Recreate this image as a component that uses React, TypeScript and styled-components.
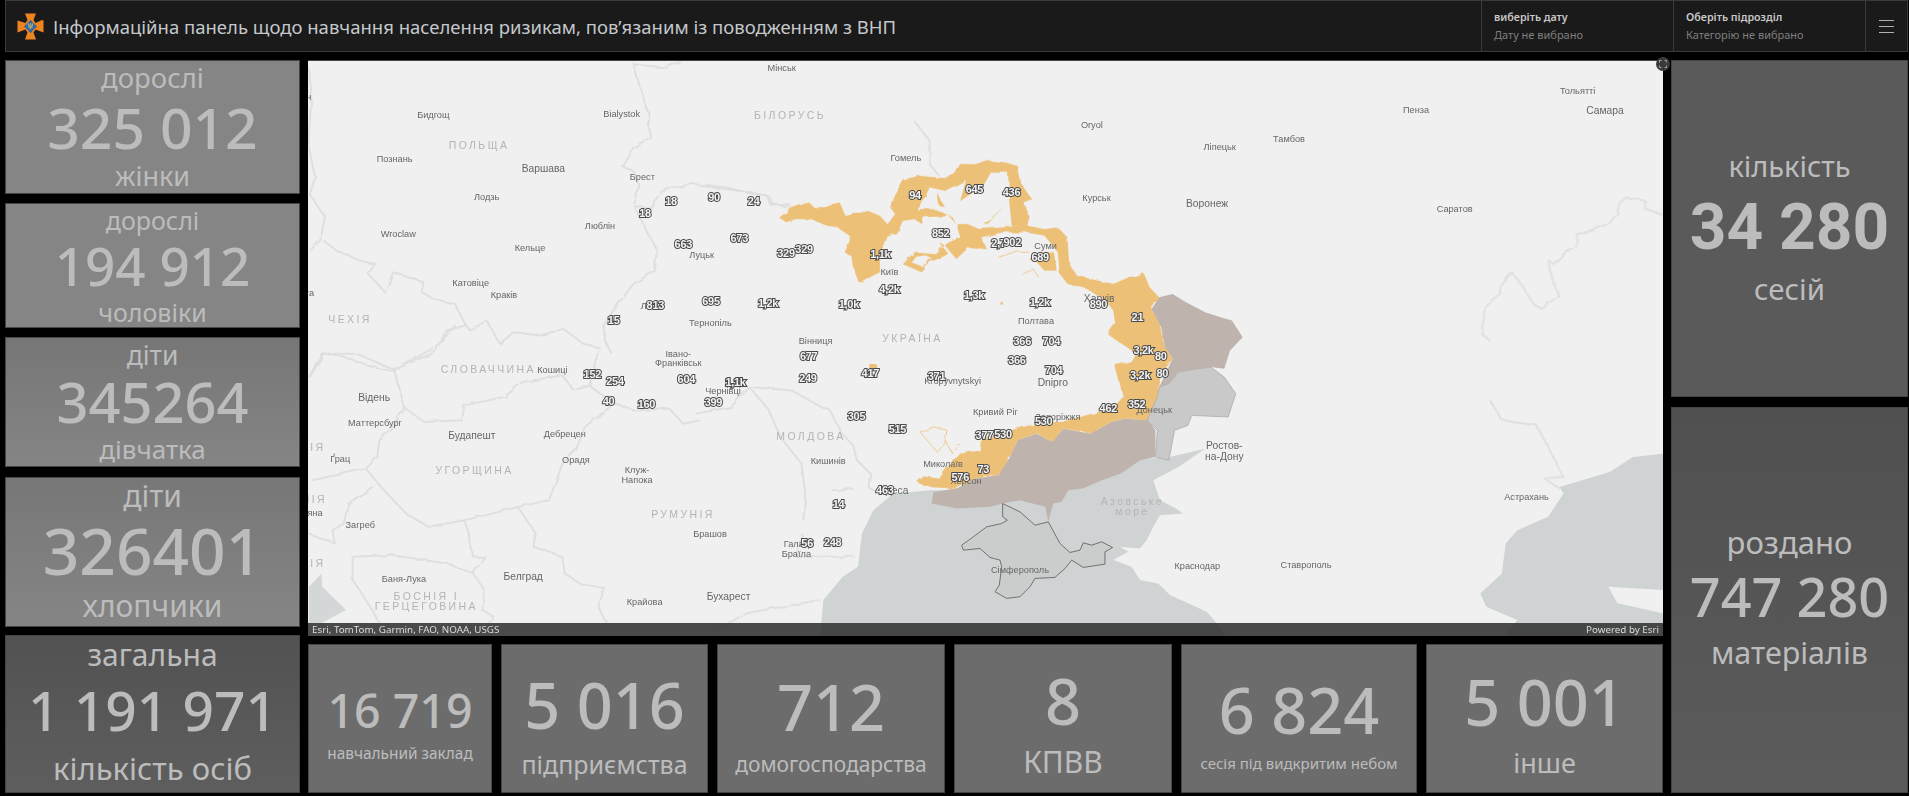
import React from "react";
import styled, { createGlobalStyle } from "styled-components";

const Global = createGlobalStyle`
  html, body { margin: 0; padding: 0; background: #000; }
  #root { width: 1909px; height: 796px; overflow: hidden; }
`;

const Page = styled.div`
  display: flex;
  flex-direction: column;
  gap: 8px;
  padding: 0 1px 3px 5px;
  width: 1903px;
  height: 793px;
  background: #000;
  font-family: "Noto Sans", sans-serif;
`;

const Header = styled.header`
  display: flex;
  align-items: stretch;
  height: 52px;
  background: #1a1a1a;
  border: 1px solid #3a3a3a;
  box-sizing: border-box;
`;

const Brand = styled.div`
  flex: 1;
  display: flex;
  align-items: center;
  gap: 9px;
  padding-left: 11px;
`;

const Title = styled.h1`
  margin: 0;
  font: 400 18.5px "Noto Sans", sans-serif;
  color: #c4c8cc;
  white-space: nowrap;
`;

const Picker = styled.div`
  width: 192px;
  box-sizing: border-box;
  border-left: 1px solid #3a3a3a;
  padding: 8px 0 0 12px;
`;

const PickerTitle = styled.div`
  font: 600 10.7px/17px "Noto Sans", sans-serif;
  color: #c8c8c8;
`;

const PickerValue = styled.div`
  font: 400 11px/17px "Noto Sans", sans-serif;
  color: #7f7f7f;
`;

const Burger = styled.div`
  width: 42px;
  box-sizing: border-box;
  border-left: 1px solid #3a3a3a;
  display: flex;
  align-items: center;
  justify-content: center;
  color: #b0b0b0;
`;

const Body = styled.div`
  display: flex;
  gap: 8px;
  height: 733px;
`;

const LeftColumn = styled.div`
  width: 295px;
  display: flex;
  flex-direction: column;
`;

const CenterColumn = styled.div`
  width: 1355px;
  display: flex;
  flex-direction: column;
  gap: 8px;
`;

const RightColumn = styled.div`
  width: 237px;
  display: flex;
  flex-direction: column;
  gap: 10px;
`;

const BottomRow = styled.div`
  display: grid;
  grid-template-columns: 184px 207px 228px 218px 236px 237px;
  gap: 9px;
  height: 149px;
`;

const Card = styled.div<{ $h?: number; $mb?: number; $bg: string; $pt: number }>`
  box-sizing: border-box;
  ${(p) => (p.$h ? `height: ${p.$h}px;` : "")}
  margin-bottom: ${(p) => p.$mb ?? 0}px;
  padding-top: ${(p) => p.$pt}px;
  background: ${(p) => p.$bg};
  border: 1px solid #454545;
  display: flex;
  flex-direction: column;
  align-items: center;
  color: #bcbcbc;
  white-space: nowrap;
`;

const CardLabel = styled.div<{ $size: number; $mt?: number }>`
  flex: none;
  height: 30px;
  line-height: 30px;
  font-family: "Noto Sans", sans-serif;
  font-size: ${(p) => p.$size}px;
  margin-top: ${(p) => p.$mt ?? 0}px;
`;

const CardValue = styled.div<{ $size: number; $mt?: number; $sans?: boolean }>`
  flex: none;
  height: 60px;
  line-height: 60px;
  font-family: ${(p) => (p.$sans ? "Roboto" : '"Noto Sans"')}, sans-serif;
  font-weight: ${(p) => (p.$sans ? 700 : 500)};
  font-size: ${(p) => p.$size}px;
  margin-top: ${(p) => p.$mt ?? 0}px;
`;

const MapFrame = styled.div`
  position: relative;
  height: 576px;
  border-top: 1px solid #454545;
  box-sizing: border-box;
  background: #f0f0f0;
`;

const MapSvg = styled.svg`
  display: block;
  width: 100%;
  height: 100%;
`;

const CityLabel = styled.text<{ $big?: boolean }>`
  font-family: "Liberation Sans", sans-serif;
  font-size: ${(p) => (p.$big ? 10.3 : 9.2)}px;
  fill: #666;
  text-anchor: middle;
  dominant-baseline: middle;
`;

const CountryLabel = styled.text`
  font-family: "Liberation Sans", sans-serif;
  font-size: 10.5px;
  letter-spacing: 2.4px;
  fill: #b4b4b4;
  text-anchor: middle;
  dominant-baseline: middle;
`;

const ClusterLabel = styled.text`
  font-family: "Liberation Sans", sans-serif;
  font-size: 11px;
  font-weight: 700;
  letter-spacing: -0.3px;
  fill: #f4f4f4;
  stroke: #4a4a4a;
  stroke-width: 2px;
  paint-order: stroke;
  text-anchor: middle;
  dominant-baseline: middle;
`;

const Attribution = styled.div`
  position: absolute;
  left: 0;
  right: 0;
  bottom: 0;
  height: 13px;
  padding: 0 4px;
  display: flex;
  justify-content: space-between;
  align-items: center;
  background: rgba(45, 45, 45, 0.85);
  color: #dcdcdc;
  font: 400 9.8px/13px "Noto Sans", sans-serif;
`;

const ExpandButton = styled.div`
  position: absolute;
  right: -7px;
  top: -4px;
  width: 14px;
  height: 14px;
  display: flex;
`;

// zoom-crop coordinates -> page coordinates
const z6 = (x: number, y: number): [number, number] => [300 + x / 3, 60 + y / 3];
const z4 = (x: number, y: number): [number, number] => [700 + x / 2.613, 120 + y / 3];
const z5 = (x: number, y: number): [number, number] => [700 + x / 1.297, 400 + y / 3];
const z3 = (x: number, y: number): [number, number] => [x / 2.24, 320 + y / 3];
const z2 = (x: number, y: number): [number, number] => [1400 + x / 3, y / 3];

type L = [string, [number, number], boolean?];

const cities: L[] = [
  ["Мінськ", z6(1445, 22)], ["Бидгощ", z6(400, 165)], ["Bialystok", z6(965, 160)], ["Познань", z6(284, 295)],
  ["Варшава", z6(730, 325), true], ["Лодзь", z6(560, 409)], ["Брест", z6(1027, 350)], ["Люблін", z6(900, 498)],
  ["Wroclaw", z6(295, 522)], ["Кельце", z6(690, 565)], ["Луцьк", z6(1205, 585)], ["Катовіце", z6(512, 669)],
  ["Краків", z6(612, 705)], ["Тернопіль", z6(1231, 788)], ["Івано-", z6(1135, 881)], ["Франківськ", z6(1135, 910)],
  ["Кошиці", z6(757, 929)], ["Чернівці", z6(1269, 994)], ["Львів", z6(1056, 738)], ["Щецін", z6(-5, 110)], ["Прага", z6(5, 700)],
  ["Гомель", z4(538, 112)], ["Oryol", z4(1024, 14)], ["Ліпецьк", z4(1358, 80)], ["Тамбов", [1289, 139]],
  ["Курськ", z4(1036, 234)], ["Воронеж", z4(1325, 252), true], ["Суми", z4(903, 378)], ["Київ", z4(495, 457)],
  ["Харків", z4(1043, 536), true], ["Полтава", z4(878, 602)], ["Вінниця", z4(302, 663)], ["Kropyvnytskyi", z4(660, 782)],
  ["Dnipro", z4(922, 790), true], ["Кривий Ріг", z4(772, 878)], ["Запоріжжя", z4(935, 892)], ["Донецьк", z4(1187, 871)],
  ["Ростов-", z4(1370, 977), true], ["на-Дону", z4(1370, 1010), true], ["Миколаїв", z4(635, 1034)], ["Херсон", z4(695, 1085)],
  ["Кишинів", z4(335, 1025)], ["Одеса", z4(505, 1113), true], ["Галац", z5(125, 432)], ["Браїла", z5(125, 462)],
  ["Бухарест", z5(37, 591), true], ["Сімферополь", z5(415, 511)], ["Краснодар", z5(645, 498)], ["Ставрополь", z5(786, 497)],
  ["Астрахань", z5(1072, 293)], ["Брашов", [710, 534]], ["Пенза", z2(48, 330)], ["Тольятті", z2(533, 273)],
  ["Самара", z2(615, 330), true], ["Саратов", z2(164, 627)], ["Відень", z3(838, 233), true], ["Маттерсбург", z3(840, 310)],
  ["Будапешт", z3(1057, 349), true], ["Дебрецен", z3(1265, 343)], ["Орадя", z3(1290, 420)], ["Клуж-", z3(1427, 450)],
  ["Напока", z3(1427, 480)], ["Ґрац", z3(762, 418)], ["Загреб", z3(807, 617)], ["Баня-Лука", z3(905, 779)],
  ["Белград", z3(1172, 773), true], ["Крайова", z3(1444, 849)], ["Любляна", z3(680, 580)],
];

const countries: L[] = [
  ["ПОЛЬЩА", z6(537, 255)], ["ЧЕХІЯ", z6(150, 780)], ["СЛОВАЧЧИНА", z6(565, 929)], ["БІЛОРУСЬ", [790, 115]],
  ["УКРАЇНА", z4(555, 656)], ["МОЛДОВА", z4(290, 952)], ["РУМУНІЯ", [683, 515]], ["УГОРЩИНА", z3(1063, 452)],
  ["БОСНІЯ І", z3(955, 833)], ["ГЕРЦЕГОВИНА", z3(955, 863)], ["АВСТРІЯ", z3(660, 383)], ["СЛОВЕНІЯ", z3(650, 541)],
  ["ХОРВАТІЯ", z3(650, 733)], ["Азовське", z4(1130, 1145)], ["море", z4(1130, 1177)],
];

const clusters: L[] = [
  ["18", z6(1113, 423)], ["90", z6(1242, 412)], ["24", z6(1361, 425)], ["18", z6(1035, 459)], ["663", z6(1150, 553)],
  ["673", z6(1318, 536)], ["329", z6(1458, 580)], ["813", z6(1066, 738)], ["695", z6(1233, 725)], ["1,2k", z6(1404, 732)],
  ["15", z6(941, 782)], ["152", z6(877, 944)], ["254", z6(945, 964)], ["604", z6(1159, 959)], ["1,1k", z6(1306, 968)],
  ["40", z3(1363, 244)], ["160", z3(1448, 254)], ["94", z4(562, 226)], ["645", z4(717, 207)], ["436", z4(814, 217)],
  ["852", z4(629, 340)], ["329", z4(272, 388)], ["1,1k", z4(471, 404)], ["2,7", z4(780, 370)], ["902", z4(816, 368)],
  ["689", z4(889, 413)], ["4,2k", z4(495, 509)], ["1,3k", z4(716, 526)], ["1,2k", z4(888, 549)], ["1,0k", z4(389, 554)],
  ["890", z4(1041, 553)], ["21", z4(1143, 592)], ["366", z4(842, 665)], ["704", z4(918, 664)], ["3,2k", z4(1159, 691)],
  ["80", z4(1204, 711)], ["366", z4(828, 721)], ["704", z4(924, 752)], ["677", z4(284, 710)], ["417", z4(445, 761)],
  ["371", z4(618, 770)], ["249", z4(282, 776)], ["1,1k", z4(93, 787)], ["399", z4(35, 848)], ["3,2k", z4(1150, 766)],
  ["80", z4(1208, 760)], ["352", z4(1141, 853)], ["462", z4(1067, 867)], ["305", z4(409, 889)], ["530", z4(898, 904)],
  ["515", z4(516, 928)], ["377", z4(743, 946)], ["530", z4(792, 944)], ["73", z4(740, 1050)], ["576", z4(680, 1075)],
  ["463", z4(483, 1113)], ["14", z4(362, 1156)], ["56", z5(139, 432)], ["248", z5(172, 430)],
];

const borders6 = [
  "1000,5 1020,80 1045,155 1050,230 1000,260 965,315 1005,335 1015,370 1005,440 1040,510 1070,565 1065,630 1000,670 940,750 910,795 920,850 935,880",
  "1005,440 1050,440 1090,385 1180,370 1280,380 1340,395 1400,405 1415,435 1470,430",
  "1000,10 1100,20 1140,0",
  "25,20 35,100 25,250 45,350 30,400 75,470 60,540 30,570",
  "70,540 110,570 180,600 225,610 205,640 255,695 280,635 370,665 365,695 400,715 465,730 495,790 510,810 560,780 600,850 640,815 720,825 790,805 850,850 905,865",
  "495,795 440,810 405,875 300,920 285,935 200,915 120,885 70,880 30,950",
];
const borders3 = [
  "885,150 905,260 950,305 1035,300 1040,255 1130,230 1170,185 1260,165 1285,210 1320,195 1375,250",
  "1340,90 1320,195",
  "885,150 800,100 720,100 692,170",
  "885,150 980,75 1020,15",
  "1375,250 1310,320 1290,390 1260,430 1230,540 1160,560 1075,590 1040,600 960,620 910,580 860,510 835,470 820,445 845,410 850,360 865,340 885,310 905,260",
  "820,445 700,480",
  "835,500 780,550 770,610 745,630 750,670 692,640",
  "1040,600 1050,640 1060,710 1085,710 1060,760 1000,730 880,705 790,710 790,780 830,860 850,910",
  "1160,560 1200,640 1195,680 1260,710 1265,760 1300,790 1355,805 1340,860 1360,910",
  "1060,760 1085,810 1080,870 1105,890 1095,910",
  "1375,250 1420,270 1500,265 1530,310 1568,300",
];
const borders4 = [
  "0,195 100,210 180,225 190,250 240,260",
  "560,0 600,60 600,130 625,165",
  "-10,880 80,860 130,800 240,810 300,850 340,870 370,940 400,975 410,1020 445,1060 440,1100 470,1120",
  "130,800 180,870 210,950 265,1030 275,1120 270,1200",
  "345,1110 400,1105",
];
const borders5 = [
  "1025,0 1040,60 1085,75 1120,230 1095,235 1115,265",
  "132,400 125,470 200,470",
  "20,690 60,640 130,610 155,600",
];
const bordersZ2 = [
  "790,640 735,625 735,600 680,590 660,605 650,640 630,665 580,690 530,700 530,740 490,760 460,790 445,780 460,840 475,885 425,925 400,910 370,860 335,815 300,860 300,880 255,915 245,1000 270,1020",
];

const orange4 = [
  "207,290 225,275 240,262 270,250 285,245 300,262 330,262 345,250 365,245 380,285 410,278 440,270 470,285 490,310 505,310 512,338 490,348 470,420 470,455 415,485 400,440 395,405 378,395 395,350 360,320 330,315 290,295 250,295 225,305",
  "490,310 510,280 497,260 505,225 530,175 575,165 640,172 665,155 675,130 720,130 750,118 800,125 830,135 840,190 868,235 845,245 860,290 855,318 815,318 808,245 805,155 760,155 740,195 700,225 680,240 695,178 640,210 600,200 590,225 565,265 615,265 660,290 670,310 650,285 585,290 580,310 560,295 530,300 515,340 490,345",
  "670,310 700,310 730,325 790,320 855,315 900,325 935,320 960,350 965,430 985,465 1040,480 1080,490 1120,470 1160,458 1175,500 1200,530 1180,565 1205,620 1215,680 1235,715 1200,770 1195,830 1170,900 1110,895 1075,905 1020,940 950,925 920,965 880,940 830,960 810,1010 780,1065 720,1075 670,1105 590,1100 567,1085 585,1068 625,1075 640,1050 680,1000 730,990 735,960 810,930 860,915 960,900 1040,875 1085,855 1105,830 1095,780 1085,735 1130,720 1140,700 1115,680 1090,660 1065,640 1085,610 1080,570 1060,540 1010,505 960,490 940,460 935,395 900,345 850,335 790,335 735,350 750,385 700,382 670,415 640,375 625,365 650,400 600,425 580,455 530,430 560,395 610,400 650,365 680,350",
  "445,733 463,733 463,750 445,750",
  "785,545 792,545 792,552 785,552",
  "860,415 890,395 925,395 932,450 900,450 880,425",
  "680,240 700,200 735,195 700,225",
  "620,215 640,260 625,255",
  "745,310 800,250 770,285 750,312",
];
const holes4 = [
  "553,425 566,408 590,404 605,412 582,438",
  "575,420 585,415 592,430 580,440",
];
const orangeLines4 = [
  "575,935 610,920 645,930 640,970 620,995 575,935",
  "640,960 660,1000 680,970",
  "845,465 870,445 885,470",
  "780,410 830,390 860,395",
];
const taupe4 = [
  "830,960 880,940 920,965 950,925 1020,940 1075,905 1110,895 1170,900 1190,930 1190,1010 1150,1020 1100,1060 1050,1080 1000,1105 963,1110 945,1145 923,1150 910,1205 902,1160 836,1140 791,1150 758,1160 671,1165 605,1150 610,1115 670,1105 720,1075 780,1065 810,1010",
  "1180,565 1200,530 1235,520 1270,545 1320,575 1360,590 1390,600 1418,650 1385,690 1370,745 1335,740 1300,745 1250,755 1225,790 1200,800 1235,715 1215,680 1205,620",
];
const grey4 = "1200,800 1225,790 1250,755 1300,745 1335,740 1370,770 1400,820 1380,890 1285,885 1275,915 1240,930 1225,1020 1190,1010 1195,930 1168,900 1195,830";
const sea7 = "-301,510 -290,390 -232,320 -186,290 -174,190 -140,120 -80,70 33,60 200,60 445,60 530,20 600,-30 680,-35 750,-40 855,-65 775,-10 700,30 720,90 760,110 790,130 720,135 700,170 680,210 660,235 600,230 625,245 580,270 635,290 660,330 715,340 750,375 860,425 900,470 930,520";
const caspian5 = "1012,580 1040,520 1045,430 1060,390 1100,350 1120,280 1115,260 1180,215 1210,170 1250,160 1250,720 1040,720 1060,660 1020,620";
const caspianLand5 = "1178,560 1250,570 1250,640 1190,610";
const crimea7 = "248,100 248,140 262,150 245,160 200,170 160,200 125,225 130,240 180,235 210,262 240,270 245,290 238,345 225,365 260,385 300,380 330,350 345,325 405,322 435,295 455,270 490,292 555,282 555,245 578,232 545,215 515,225 490,218 480,240 450,247 420,220 385,155 345,165 300,125";
const adriatic3 = "692,800 720,760 722,800 775,870 720,910 692,910";

const G = ({ t, s }: { t: string; s: string }) => (
  <g transform={t} dangerouslySetInnerHTML={{ __html: s }} />
);
const T4 = "translate(700 120) scale(.3827 .3333)";
const T5 = "translate(700 400) scale(.771 .3333)";
const T3 = "translate(0 320) scale(.4464 .3333)";
const T6 = "translate(300 60) scale(.3333)";
const T2 = "translate(1400 0) scale(.3333)";
const T7 = "translate(920 470) scale(.3333)";

const lines = (list: string[]) =>
  list.map((p) => `<polyline points="${p}" fill="none" vector-effect="non-scaling-stroke"/>`).join("");
const polys = (list: string[], fill: string) =>
  list.map((p) => `<polygon points="${p}" fill="${fill}"/>`).join("");

const MapDrawing = () => (
  <MapSvg viewBox="308 60 1355 576" preserveAspectRatio="none">
    <defs>
      <filter id="rough" x="-5%" y="-5%" width="110%" height="110%">
        <feTurbulence type="fractalNoise" baseFrequency="0.09" numOctaves="2" seed="4" />
        <feDisplacementMap in="SourceGraphic" scale="4" />
      </filter>
    </defs>
    <rect x="308" y="60" width="1355" height="576" fill="#f0f0f0" />
    <G t={T7} s={polys([sea7], "#cfd3d4")} />
    <G t={T5} s={polys([caspian5], "#cfd3d4") + polys([caspianLand5], "#f0f0f0")} />
    <G t={T3} s={polys([adriatic3], "#d4d7d8")} />
    <g filter="url(#rough)">
      <g stroke="#dfdfdf" strokeWidth="2" strokeLinejoin="round">
        <G t={T6} s={lines(borders6)} />
        <G t={T3} s={lines(borders3)} />
        <G t={T4} s={lines(borders4)} />
        <G t={T5} s={lines(borders5)} />
        <G t={T2} s={lines(bordersZ2)} />
      </g>
      <G t={T4} s={polys(orange4, "#edc077") + polys(holes4, "#f0f0f0")} />
      <g stroke="#edc077" strokeWidth=".8">
        <G t={T4} s={lines(orangeLines4)} />
      </g>
    </g>
    <G t={T4} s={polys(taupe4, "#bfb3ad") + polys([grey4], "#c9c9c9")} />
    <g stroke="#ababab" strokeWidth=".8">
      <G t={T4} s={`<polygon points="${grey4}" fill="none" vector-effect="non-scaling-stroke"/>`} />
    </g>
    <g stroke="#666" strokeWidth=".9" strokeLinejoin="round">
      <G t={T7} s={`<polygon points="${crimea7}" fill="#cbcccc" vector-effect="non-scaling-stroke"/>`} />
    </g>
    {countries.map(([t, [x, y]], i) => (
      <CountryLabel key={i} x={x} y={y}>{t}</CountryLabel>
    ))}
    {cities.map(([t, [x, y], big], i) => (
      <CityLabel key={i} x={x} y={y} $big={big}>{t}</CityLabel>
    ))}
    {clusters.map(([t, [x, y]], i) => (
      <ClusterLabel key={i} x={x} y={y}>{t}</ClusterLabel>
    ))}
  </MapSvg>
);

const Logo = () => (
  <svg width="27" height="27" viewBox="0 0 54 54">
    <path d="M16 1h22l-5 13 4 6 13-6v0l3 1v24l-16-6-4 6 5 14H16l5-14-4-6-16 6V15l16 5 4-6z" fill="#ee8420" />
    <path d="M27 14l5 5H22zM27 40l5-5H22zM14 27l5-5v10zM40 27l-5-5v10z" fill="#2d5d9a" />
    <circle cx="27" cy="27" r="9" fill="#2d6cb0" />
    <path d="M23 21l1 8 3 3 3-3 1-8-2 7-2 1-2-1zM27 20v10" stroke="#e8c24a" strokeWidth="1.2" fill="none" />
  </svg>
);

const ExpandIcon = () => (
  <svg width="14" height="14" viewBox="0 0 14 14">
    <circle cx="7" cy="7" r="7" fill="#3a3a3a" />
    <path d="M3.5 5.5v-2h2M8.5 3.5h2v2M10.5 8.5v2h-2M5.5 10.5h-2v-2" stroke="#bdbdbd" strokeWidth=".8" fill="none" />
  </svg>
);

const BurgerIcon = () => (
  <svg width="15" height="13" viewBox="0 0 15 13">
    <path d="M0 .5h15M0 6.5h15M0 12.5h15" stroke="currentColor" strokeWidth="1" />
  </svg>
);

type Stat = {
  top?: string; value: string; bottom: string; ts?: number; vs: number; bs: number;
  pt: number; m1?: number; m2: number; h?: number; mb?: number; bg: string; sans?: boolean;
};

const grey = "#858585";
const bottomBg = "#6c6c6c";
const leftStats: Stat[] = [
  { top: "дорослі", value: "325 012", bottom: "жінки", ts: 27.5, vs: 57, bs: 27, pt: 2, m1: 4, m2: 4, h: 134, mb: 9, bg: grey },
  { top: "дорослі", value: "194 912", bottom: "чоловіки", ts: 25, vs: 53, bs: 25, pt: 1, m1: 1, m2: 1, h: 125, mb: 9, bg: grey },
  { top: "діти", value: "345264", bottom: "дівчатка", ts: 26.5, vs: 56, bs: 26, pt: 2, m1: 1, m2: 3, h: 130, mb: 10, bg: "linear-gradient(#767676,#858585)" },
  { top: "діти", value: "326401", bottom: "хлопчики", ts: 30, vs: 64, bs: 30, pt: 3, m1: 10, m2: 10, h: 150, mb: 8, bg: "linear-gradient(#777777,#858585)" },
  { top: "загальна", value: "1 191 971", bottom: "кількість осіб", ts: 30, vs: 55, bs: 31, pt: 4, m1: 10, m2: 13, h: 158, bg: "linear-gradient(#525252,#5e5e5e)" },
];
const bottomStats: Stat[] = [
  { value: "16 719", bottom: "навчальний заклад", vs: 46.5, bs: 15.4, pt: 35, m2: -1, bg: bottomBg },
  { value: "5 016", bottom: "підприємства", vs: 63, bs: 25, pt: 30, m2: 14, bg: bottomBg },
  { value: "712", bottom: "домогосподарства", vs: 63, bs: 21, pt: 32, m2: 12, bg: bottomBg },
  { value: "8", bottom: "КПВВ", vs: 63, bs: 30, pt: 26, m2: 16, bg: bottomBg },
  { value: "6 824", bottom: "сесія під видкритим небом", vs: 63, bs: 15, pt: 35, m2: 8, bg: bottomBg },
  { value: "5 001", bottom: "інше", vs: 63, bs: 27, pt: 27, m2: 16, bg: bottomBg },
];
const rightStats: Stat[] = [
  { top: "кількість", value: "34 280", bottom: "сесій", ts: 29, vs: 64, bs: 29.5, pt: 90, m1: 17, m2: 16, h: 337, bg: "#5a5a5a", sans: true },
  { top: "роздано", value: "747 280", bottom: "матеріалів", ts: 31, vs: 54, bs: 30.5, pt: 119, m1: 9, m2: 11, h: 386, bg: "linear-gradient(#505050,#5b5b5b)" },
];

const StatCard = ({ s }: { s: Stat }) => (
  <Card $h={s.h} $mb={s.mb} $bg={s.bg} $pt={s.pt}>
    {s.top && <CardLabel $size={s.ts ?? 26}>{s.top}</CardLabel>}
    <CardValue $size={s.vs} $mt={s.m1 ?? 0} $sans={s.sans}>{s.value}</CardValue>
    <CardLabel $size={s.bs} $mt={s.m2}>{s.bottom}</CardLabel>
  </Card>
);

export default function App() {
  return (
    <>
      <Global />
      <Page>
        <Header>
          <Brand>
            <Logo />
            <Title>Інформаційна панель щодо навчання населення ризикам, пов’язаним із поводженням з ВНП</Title>
          </Brand>
          <Picker>
            <PickerTitle>виберіть дату</PickerTitle>
            <PickerValue>Дату не вибрано</PickerValue>
          </Picker>
          <Picker>
            <PickerTitle>Оберіть підрозділ</PickerTitle>
            <PickerValue>Категорію не вибрано</PickerValue>
          </Picker>
          <Burger><BurgerIcon /></Burger>
        </Header>
        <Body>
          <LeftColumn>
            {leftStats.map((s, i) => <StatCard key={i} s={s} />)}
          </LeftColumn>
          <CenterColumn>
            <MapFrame>
              <MapDrawing />
              <Attribution>
                <span>Esri, TomTom, Garmin, FAO, NOAA, USGS</span>
                <span>Powered by Esri</span>
              </Attribution>
              <ExpandButton><ExpandIcon /></ExpandButton>
            </MapFrame>
            <BottomRow>
              {bottomStats.map((s, i) => <StatCard key={i} s={s} />)}
            </BottomRow>
          </CenterColumn>
          <RightColumn>
            {rightStats.map((s, i) => <StatCard key={i} s={s} />)}
          </RightColumn>
        </Body>
      </Page>
    </>
  );
}
